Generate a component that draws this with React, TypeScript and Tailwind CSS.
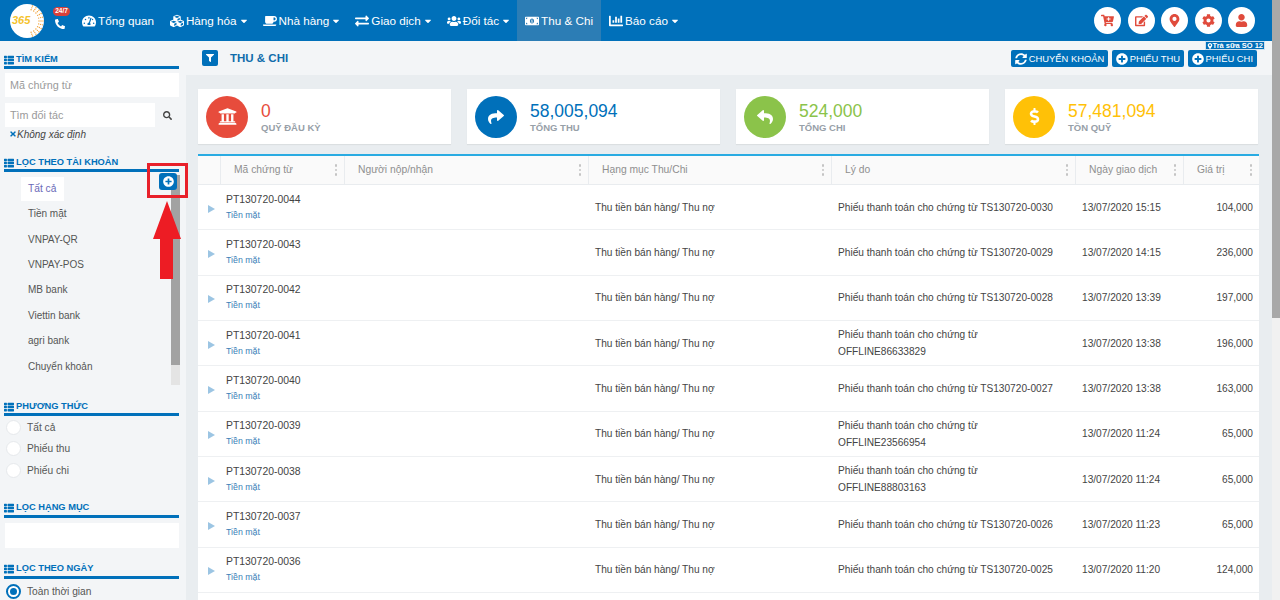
import type { ReactNode } from 'react'
import {
  FaTachometerAlt, FaCubes, FaCoffee, FaExchangeAlt, FaUsers, FaMoneyBillAlt, FaChartBar, FaCaretDown,
  FaCartPlus, FaEdit, FaMapMarkerAlt, FaCog, FaUser, FaFilter, FaSyncAlt, FaPlusCircle, FaUniversity, FaShare, FaReply,
  FaDollarSign, FaThList, FaSearch, FaTimes, FaPhone,
} from 'react-icons/fa'

const nav = [
  { label: 'Tổng quan', icon: FaTachometerAlt, caret: false },
  { label: 'Hàng hóa', icon: FaCubes, caret: true },
  { label: 'Nhà hàng', icon: FaCoffee, caret: true },
  { label: 'Giao dịch', icon: FaExchangeAlt, caret: true },
  { label: 'Đối tác', icon: FaUsers, caret: true },
  { label: 'Thu & Chi', icon: FaMoneyBillAlt, caret: false, active: true },
  { label: 'Báo cáo', icon: FaChartBar, caret: true },
]

const rows = [
  ['0044', 'Phiếu thanh toán cho chứng từ TS130720-0030', '13/07/2020 15:15', '104,000'],
  ['0043', 'Phiếu thanh toán cho chứng từ TS130720-0029', '13/07/2020 14:15', '236,000'],
  ['0042', 'Phiếu thanh toán cho chứng từ TS130720-0028', '13/07/2020 13:39', '197,000'],
  ['0041', 'Phiếu thanh toán cho chứng từ OFFLINE86633829', '13/07/2020 13:38', '196,000'],
  ['0040', 'Phiếu thanh toán cho chứng từ TS130720-0027', '13/07/2020 13:38', '163,000'],
  ['0039', 'Phiếu thanh toán cho chứng từ OFFLINE23566954', '13/07/2020 11:24', '65,000'],
  ['0038', 'Phiếu thanh toán cho chứng từ OFFLINE88803163', '13/07/2020 11:24', '65,000'],
  ['0037', 'Phiếu thanh toán cho chứng từ TS130720-0026', '13/07/2020 11:23', '65,000'],
  ['0036', 'Phiếu thanh toán cho chứng từ TS130720-0025', '13/07/2020 11:20', '124,000'],
]

const accounts = ['Tiền mặt', 'VNPAY-QR', 'VNPAY-POS', 'MB bank', 'Viettin bank', 'agri bank', 'Chuyển khoản']

function Logo() {
  const dots = []
  for (let r = 12; r <= 16; r += 2) {
    for (let a = -70; a <= 70; a += 14) {
      const rad = (a * Math.PI) / 180
      dots.push(<circle key={`${r}-${a}`} cx={17 + r * Math.cos(rad)} cy={17 + r * Math.sin(rad)} r="0.7" fill="#f2a33a" />)
    }
  }
  return (
    <div className="relative w-[34px] h-[34px] rounded-full bg-white shrink-0 overflow-hidden">
      <svg viewBox="0 0 34 34" className="w-full h-full">{dots}</svg>
      <span className="absolute left-[2px] top-[11px] text-[11px] leading-none font-bold italic text-[#f5c32c]">365</span>
    </div>
  )
}

function SectionTitle({ children }: { children: ReactNode }) {
  return (
    <div className="flex items-center gap-[2px] h-[17px] pt-[1px] border-b-[3px] border-[#0070ba] text-[#0070ba] text-[9.3px] font-bold leading-none">
      <FaThList size={10} />
      <span>{children}</span>
    </div>
  )
}

function Radio({ label, checked }: { label: string; checked?: boolean }) {
  return (
    <div className="flex items-center h-[21.5px] text-[10.2px] text-[#555]">
      {checked ? (
        <span className="w-[15px] h-[15px] ml-[2px] rounded-full border-2 border-[#0070ba] bg-white flex items-center justify-center">
          <span className="w-[7px] h-[7px] rounded-full bg-[#0070ba]" />
        </span>
      ) : (
        <span className="w-[15px] h-[15px] ml-[2px] rounded-full border border-[#e6e9ec] bg-white" />
      )}
      <span className="ml-[6px]">{label}</span>
    </div>
  )
}

function Sidebar() {
  return (
    <aside className="relative w-[186px] shrink-0 bg-[#f3f5f7] pl-[4px] pr-[7px] pt-[11px]">
      <SectionTitle>TÌM KIẾM</SectionTitle>
      <div className="mt-[4px] ml-[1px] h-[24px] bg-white flex items-center px-[5px] text-[10.8px] text-[#9a9a9a]">Mã chứng từ</div>
      <div className="mt-[6px] ml-[1px] flex h-[24px]">
        <div className="w-[150px] bg-white flex items-center px-[5px] text-[10.8px] text-[#9a9a9a]">Tìm đối tác</div>
        <div className="w-[24px] flex items-center justify-center text-[#444]"><FaSearch size={9} /></div>
      </div>
      <div className="ml-[5px] flex items-center text-[10px] italic text-[#444] h-[14px]">
        <FaTimes size={8} className="text-[#0070ba]" />
        <span>Không xác định</span>
      </div>

      <div className="mt-[14px]"><SectionTitle>LỌC THEO TÀI KHOẢN</SectionTitle></div>
      <div className="relative h-[211px]">
        <div className="pt-[5px] pl-[17px]">
          <div className="w-[43px] h-[24px] bg-white flex items-center pl-[7px] text-[10.2px] text-[#6a6ab8]">Tất cả</div>
          <div className="pl-[7px]">
            {accounts.map((a) => (
              <div key={a} className="h-[25.4px] flex items-center text-[10px] text-[#555]">{a}</div>
            ))}
          </div>
        </div>
        <div className="absolute left-[167px] top-[3px] w-[9px] h-[210px] bg-[#e4e4e4]">
          <div className="h-[190px] bg-[#a2a2a2]" />
        </div>
        <div className="absolute left-[155px] top-[1px] w-[18px] h-[17px] rounded-[3px] bg-[#0070ba] flex items-center justify-center text-white">
          <FaPlusCircle size={11} />
        </div>
      </div>

      <div className="mt-[16px]"><SectionTitle>PHƯƠNG THỨC</SectionTitle></div>
      <div className="pt-[0.5px]">
        <Radio label="Tất cả" />
        <Radio label="Phiếu thu" />
        <Radio label="Phiếu chi" />
      </div>

      <div className="mt-[19.5px]"><SectionTitle>LỌC HẠNG MỤC</SectionTitle></div>
      <div className="mt-[5px] ml-[1px] h-[25px] bg-white" />

      <div className="mt-[14px]"><SectionTitle>LỌC THEO NGÀY</SectionTitle></div>
      <div className="mt-[2px]"><Radio label="Toàn thời gian" checked /></div>

      <div className="absolute left-[147px] top-[122px] w-[41px] h-[35px] border-[3px] border-[#e8202a]" />
      <svg viewBox="0 0 28 78" className="absolute left-[153px] top-[160px] w-[28px] h-[78px]">
        <polygon points="14,0 28,38 20,38 20,78 7,78 7,38 0,38" fill="#ed1c24" />
      </svg>
    </aside>
  )
}

function StatCard({ icon, bg, text, value, label }: { icon: ReactNode; bg: string; text: string; value: string; label: string }) {
  return (
    <div className="flex-1 h-[55px] bg-white flex items-center pl-[8px] shadow-[0_1px_1px_rgba(0,0,0,0.06)]">
      <div className={`w-[42px] h-[42px] rounded-full flex items-center justify-center text-white ${bg}`}>{icon}</div>
      <div className="ml-[13px]">
        <div className={`text-[17.5px] leading-[20px] mt-[2px] ${text}`}>{value}</div>
        <div className="text-[9.5px] font-bold text-[#97a0a8] leading-[12px] mt-[1px]">{label}</div>
      </div>
    </div>
  )
}

function HeadCell({ label, className }: { label: string; className: string }) {
  return (
    <div className={`h-full flex items-center justify-between border-r border-[#e9ecef] text-[10.3px] text-[#8f8f8f] ${className}`}>
      <span>{label}</span>
      <span className="flex flex-col gap-[2px] mr-[7px]">
        <i className="w-[2.5px] h-[2.5px] rounded-full bg-[#c4c4c4]" />
        <i className="w-[2.5px] h-[2.5px] rounded-full bg-[#c4c4c4]" />
        <i className="w-[2.5px] h-[2.5px] rounded-full bg-[#c4c4c4]" />
      </span>
    </div>
  )
}

function HeaderBtn({ icon, label }: { icon: ReactNode; label: string }) {
  return (
    <button className="h-[17px] px-[4px] flex items-center gap-[2px] rounded-[2px] bg-[#0070ba] text-white text-[9.4px] leading-none whitespace-nowrap">
      {icon}
      {label}
    </button>
  )
}

export default function App() {
  return (
    <div className="relative w-full h-[600px] overflow-hidden flex flex-col bg-[#e9edf0] font-['Liberation_Sans',Arial,sans-serif]">
      <header className="h-[41px] shrink-0 bg-[#0070ba] flex items-center pl-[10px] pr-[25px] text-white">
        <Logo />
        <div className="relative w-[37px] flex justify-center pt-[6px] mr-[-2px]">
          <FaPhone size={10} className="-scale-x-100 mr-[6px]" />
          <span className="absolute left-[9px] top-[-6px] w-[17px] h-[9px] rounded-full bg-[#d9403a] text-[6.5px] font-bold flex items-center justify-center">24/7</span>
        </div>
        <nav className="flex h-full ml-[-5px]">
          {nav.map((n) => (
            <div key={n.label} className={`flex items-center h-full gap-[2px] pl-[8px] text-[11.7px] ${n.caret ? 'pr-[6px]' : 'pr-[8px]'} ${n.active ? 'bg-[#2c7db5]' : ''}`}>
              <n.icon size={14} />
              <span className="whitespace-nowrap">{n.label}</span>
              {n.caret && <FaCaretDown size={10} />}
            </div>
          ))}
        </nav>
        <div className="ml-auto flex gap-[6.5px] text-[#e04b3c]">
          {[FaCartPlus, FaEdit, FaMapMarkerAlt, FaCog, FaUser].map((Icon, i) => (
            <div key={i} className="w-[27px] h-[27px] rounded-full bg-white flex items-center justify-center">
              <Icon size={13} />
            </div>
          ))}
        </div>
      </header>

      <div className="flex flex-1 min-h-0">
        <Sidebar />
        <main className="flex-1 min-w-0 relative">
          <div className="h-[34px] bg-[#f3f5f7] flex items-center pl-[16px] pr-[23px]">
            <div className="w-[16px] h-[16px] rounded-[2px] bg-[#0070ba] flex items-center justify-center text-white"><FaFilter size={8} /></div>
            <div className="ml-[12px] mt-[1px] text-[11.5px] font-bold text-[#0f6cab]">THU &amp; CHI</div>
            <div className="ml-auto flex gap-[3.5px] mt-[1px]">
              <HeaderBtn icon={<FaSyncAlt size={12} />} label="CHUYỂN KHOẢN" />
              <HeaderBtn icon={<FaPlusCircle size={12} />} label="PHIẾU THU" />
              <HeaderBtn icon={<FaPlusCircle size={12} />} label="PHIẾU CHI" />
            </div>
          </div>
          <div className="absolute right-[15px] top-0 h-[9px] px-[1px] bg-[#0070ba] flex items-center text-white text-[7.5px] font-bold border border-[#cfe2f0] leading-none whitespace-nowrap">
            <FaMapMarkerAlt size={6} />Trà sữa SỐ 12
          </div>

          <div className="pl-[12px] pr-[22px] pt-[14px]">
            <div className="flex gap-[16px]">
              <StatCard icon={<FaUniversity size={19} />} bg="bg-[#e74c3c]" text="text-[#e74c3c]" value="0" label="QUỸ ĐẦU KỲ" />
              <StatCard icon={<FaShare size={16} />} bg="bg-[#0070ba]" text="text-[#0070ba]" value="58,005,094" label="TỔNG THU" />
              <StatCard icon={<FaReply size={16} />} bg="bg-[#8bc34a]" text="text-[#8bc34a]" value="524,000" label="TỔNG CHI" />
              <StatCard icon={<FaDollarSign size={17} />} bg="bg-[#ffc107]" text="text-[#ffc107]" value="57,481,094" label="TỒN QUỸ" />
            </div>

            <div className="mt-[10px] mr-[-1px] border-t-2 border-[#29abe2] bg-white">
              <div className="flex h-[29px] bg-[#fafafa] border-b border-[#e9ecef]">
                <div className="w-[23px] border-r border-[#e9ecef]" />
                <HeadCell label="Mã chứng từ" className="w-[124px] pl-[13px]" />
                <HeadCell label="Người nộp/nhận" className="w-[244px] pl-[13px]" />
                <HeadCell label="Hạng mục Thu/Chi" className="w-[243px] pl-[13px]" />
                <HeadCell label="Lý do" className="w-[244px] pl-[13px]" />
                <HeadCell label="Ngày giao dịch" className="w-[108px] pl-[13px]" />
                <HeadCell label="Giá trị" className="flex-1 pl-[13px] border-r-0" />
              </div>
              {rows.map(([id, reason, date, value]) => (
                <div key={id} className="flex items-center h-[45.35px] border-b border-[#eef0f2] text-[10.15px] text-[#444]">
                  <div className="w-[23px] pl-[10px] pt-[3px]">
                    <svg viewBox="0 0 7 8" className="w-[7px] h-[8px]"><polygon points="0,0 7,4 0,8" fill="#9cc5e3" /></svg>
                  </div>
                  <div className="w-[368px] pl-[5px]">
                    <div className="text-[10.4px] leading-[14px]">PT130720-{id}</div>
                    <div className="text-[8.8px] text-[#3a7fb8] leading-[14px] mt-[1px]">Tiền mặt</div>
                  </div>
                  <div className="w-[243px] pl-[6px]">Thu tiền bán hàng/ Thu nợ</div>
                  <div className="w-[244px] pl-[6px] pr-[18px] leading-[17px]">{reason}</div>
                  <div className="w-[108px] pl-[6px]">{date}</div>
                  <div className="flex-1 text-right pr-[6px]">{value}</div>
                </div>
              ))}
              <div className="h-[20px]" />
            </div>
          </div>
        </main>
      </div>

      <div className="absolute right-0 top-0 bottom-0 w-[8px] bg-[#f1f1f1]">
        <div className="h-[318px] bg-[#a8a8a8]" />
      </div>
    </div>
  )
}
